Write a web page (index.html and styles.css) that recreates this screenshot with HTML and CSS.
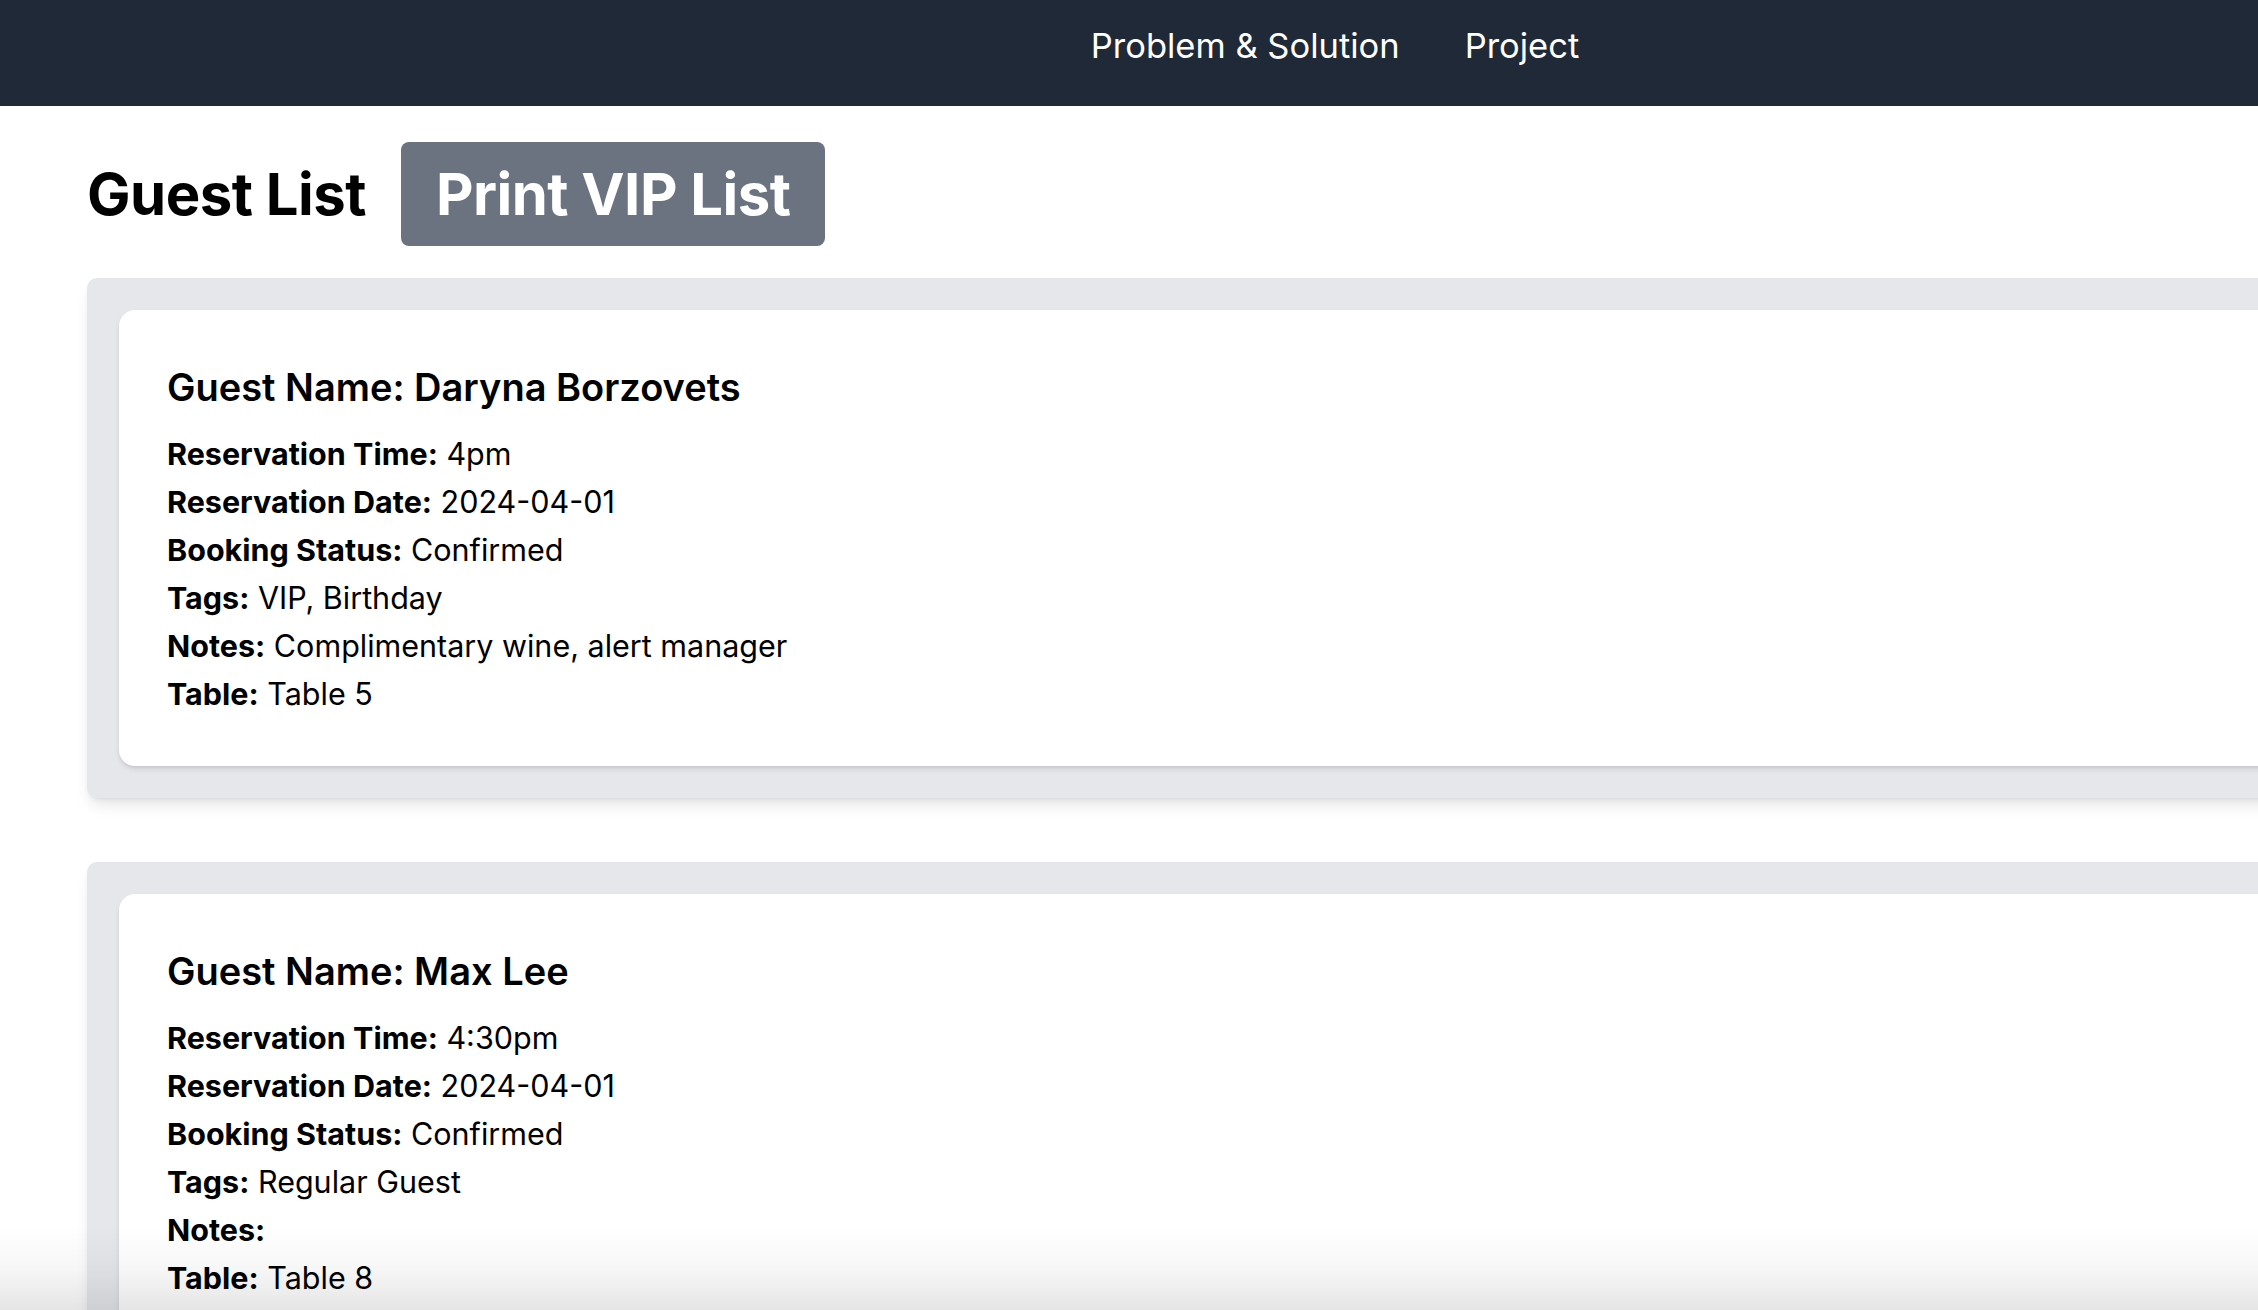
FILE: index.html
```html
<!DOCTYPE html>
<html lang="en">
<head>
<meta charset="utf-8">
<title>Guest List</title>
<link rel="stylesheet" href="styles.css">
</head>
<body>
<div class="page">
  <nav class="topbar">
    <a class="nav-link" href="#">Problem &amp; Solution</a>
    <a class="nav-link" href="#">Project</a>
  </nav>
  <main class="content">
    <div class="title-row">
      <h1 class="title">Guest List</h1>
      <button class="print-btn">Print VIP List</button>
    </div>
    <section class="guest-wrap">
      <div class="guest-card">
        <h2 class="guest-name">Guest Name: Daryna Borzovets</h2>
        <p class="row"><b>Reservation Time:</b> 4pm</p>
        <p class="row"><b>Reservation Date:</b> 2024-04-01</p>
        <p class="row"><b>Booking Status:</b> Confirmed</p>
        <p class="row"><b>Tags:</b> VIP, Birthday</p>
        <p class="row"><b>Notes:</b> Complimentary wine, alert manager</p>
        <p class="row"><b>Table:</b> Table 5</p>
      </div>
    </section>
    <section class="guest-wrap">
      <div class="guest-card">
        <h2 class="guest-name">Guest Name: Max Lee</h2>
        <p class="row"><b>Reservation Time:</b> 4:30pm</p>
        <p class="row"><b>Reservation Date:</b> 2024-04-01</p>
        <p class="row"><b>Booking Status:</b> Confirmed</p>
        <p class="row"><b>Tags:</b> Regular Guest</p>
        <p class="row"><b>Notes:</b> </p>
        <p class="row"><b>Table:</b> Table 8</p>
      </div>
    </section>
  </main>
</div>
<div class="bottom-fade"></div>
</body>
</html>
```
FILE: styles.css
```css
html, body {
  margin: 0;
  padding: 0;
  background: #ffffff;
}
body {
  font-family: Inter, "Noto Sans", "Liberation Sans", sans-serif;
  color: #000;
  overflow: hidden;
}
.page {
  width: 2670px;
}
.topbar {
  height: 106px;
  box-sizing: border-box;
  background: #1f2937;
  display: flex;
  justify-content: center;
  align-items: flex-start;
  gap: 65px;
  padding-top: 26px;
}
.nav-link {
  color: #ffffff;
  text-decoration: none;
  font-size: 34.5px;
  line-height: 40px;
  letter-spacing: 0;
}
.content {
  padding: 36px 87px 0 87px;
}
.title-row {
  display: flex;
  align-items: center;
  gap: 35px;
  margin-bottom: 32px;
}
.title {
  margin: 0;
  font-size: 58px;
  line-height: 72px;
  font-weight: 700;
  letter-spacing: -0.5px;
  white-space: nowrap;
}
.print-btn {
  font-family: inherit;
  font-size: 58px;
  line-height: 72px;
  font-weight: 700;
  letter-spacing: -0.5px;
  white-space: nowrap;
  color: #ffffff;
  background: #6b7280;
  border: none;
  border-radius: 8px;
  padding: 16px 35px;
  height: 104px;
  flex: none;
}
.guest-wrap {
  background: #e5e7eb;
  border-radius: 10px;
  padding: 32px;
  margin-bottom: 64px;
  box-shadow: 0 10px 15px -3px rgba(0,0,0,0.1), 0 4px 6px -4px rgba(0,0,0,0.1);
}
.guest-card {
  background: #ffffff;
  border-radius: 16px;
  padding: 48px;
  box-shadow: 0 4px 6px -1px rgba(0,0,0,0.1), 0 2px 4px -2px rgba(0,0,0,0.1);
}
.guest-name {
  margin: 0 0 14px 0;
  font-size: 38px;
  line-height: 58px;
  font-weight: 600;
  letter-spacing: 0;
}
.row {
  margin: 0;
  font-size: 30.5px;
  line-height: 48px;
  letter-spacing: 0;
}
.row b {
  font-weight: 700;
}
.bottom-fade {
  position: fixed;
  left: 0;
  right: 0;
  bottom: 0;
  height: 85px;
  pointer-events: none;
  background: linear-gradient(to bottom, rgba(0,0,0,0) 0%, rgba(0,0,0,0.03) 50%, rgba(0,0,0,0.1) 100%);
}
```
